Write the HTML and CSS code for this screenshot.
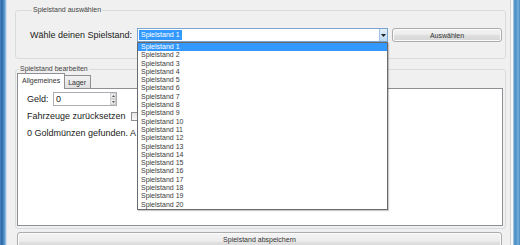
FILE: index.html
```html
<!DOCTYPE html>
<html lang="de">
<head>
  <meta charset="UTF-8">
  <title>Spielstand Editor</title>
  <link rel="stylesheet" href="styles.css">
</head>
<body>
  <div class="window">
    <div class="frame frame-left"></div>

    <div class="client">
      <fieldset class="group group-select">
        <legend>Spielstand auswählen</legend>
        <div class="select-row">
          <label class="big-label select-label">Wähle deinen Spielstand:</label>
          <div class="combo">
            <span class="combo-value">Spielstand 1</span>
            <span class="combo-arrow">
              <svg width="5" height="3" viewBox="0 0 5 3"><path d="M0 0h5L2.5 3z" fill="#222"/></svg>
            </span>
            <ul class="combo-list">
              <li class="selected">Spielstand 1</li>
              <li>Spielstand 2</li>
              <li>Spielstand 3</li>
              <li>Spielstand 4</li>
              <li>Spielstand 5</li>
              <li>Spielstand 6</li>
              <li>Spielstand 7</li>
              <li>Spielstand 8</li>
              <li>Spielstand 9</li>
              <li>Spielstand 10</li>
              <li>Spielstand 11</li>
              <li>Spielstand 12</li>
              <li>Spielstand 13</li>
              <li>Spielstand 14</li>
              <li>Spielstand 15</li>
              <li>Spielstand 16</li>
              <li>Spielstand 17</li>
              <li>Spielstand 18</li>
              <li>Spielstand 19</li>
              <li>Spielstand 20</li>
            </ul>
          </div>
          <button class="btn btn-select">Auswählen</button>
        </div>
      </fieldset>

      <fieldset class="group group-edit">
        <legend>Spielstand bearbeiten</legend>
        <div class="tabs">
          <div class="tab-strip">
            <span class="tab active">Allgemeines</span>
            <span class="tab">Lager</span>
          </div>
          <div class="tab-page">
            <div class="field-row">
              <span class="big-label geld-label">Geld:</span>
              <div class="spin">
                <span class="spin-value">0</span>
                <span class="spin-btns">
                  <span class="spin-btn"><svg width="3" height="2" viewBox="0 0 3 2"><path d="M1.5 0L3 2H0z" fill="#555"/></svg></span>
                  <span class="spin-btn"><svg width="3" height="2" viewBox="0 0 3 2"><path d="M0 0h3L1.5 2z" fill="#555"/></svg></span>
                </span>
              </div>
            </div>
            <div class="field-row">
              <span class="big-label">Fahrzeuge zurücksetzen</span>
              <span class="check"></span>
            </div>
            <div class="field-row">
              <span class="big-label">0 Goldmünzen gefunden. A</span>
            </div>
          </div>
        </div>
      </fieldset>

      <button class="btn btn-save">Spielstand abspeichern</button>
    </div>

    <div class="frame frame-right"></div>
  </div>
</body>
</html>
```

FILE: styles.css
```css
html, body {
  margin: 0;
  padding: 0;
  overflow: hidden;
}

body {
  font-family: "Liberation Sans", Arial, sans-serif;
  color: #333;
  background-color: #f0f0f0;
}

.window {
  display: flex;
  width: 520px;
  height: 245px;
  overflow: hidden;
}

.frame {
  flex: none;
  width: 7px;
}

.frame-left {
  background: linear-gradient(to right, #4b87c0 0, #2a63a0 2px, #3f7fbb 3px, #6aa3d4 5px, #b6d0e8 6px, #e9eef3 7px);
}

.frame-right {
  background: linear-gradient(to right, #e6eaee 0, #5c9acb 1px, #4f8fc4 3px, #73b3de 5px, #4a86bd 7px);
}

.client {
  flex: 1;
  padding: 6px 6px 0 8px;
  background-color: #f0f0f0;
  box-shadow: inset -2px 0 0 #f7f7f7, inset -3px 0 0 #d4d4d4;
}

/* group boxes */
.group {
  margin: 0;
  padding: 0;
  border: 1px solid #d7dcdf;
  border-radius: 3px;
}

.group legend {
  margin-left: 2px;
  padding: 0 1px;
  font-size: 7px;
  line-height: 8px;
  color: #444;
}

.group-select {
  width: 491px;
  padding: 0 3px 16px 14px;
  box-sizing: border-box;
}

.group-edit {
  width: 491px;
  margin-top: 6px;
  padding: 0 2px 2px 1px;
  box-sizing: border-box;
}

.big-label {
  font-size: 9px;
  color: #222;
  white-space: nowrap;
}

/* select row */
.select-row {
  display: flex;
  align-items: center;
  height: 14px;
  margin-top: 14px;
}

.select-label {
  width: 107px;
  flex: none;
}

.combo {
  position: relative;
  display: flex;
  align-items: center;
  width: 251px;
  height: 14px;
  box-sizing: border-box;
  padding-left: 1px;
  border: 1px solid #7ba4cf;
  background: #fff;
}

.combo-value {
  padding: 0 2px;
  font-size: 7px;
  line-height: 10px;
  color: #fff;
  background: #3399ff;
}

.combo-arrow {
  display: flex;
  align-items: center;
  justify-content: center;
  width: 8px;
  height: 12px;
  margin-left: auto;
  box-sizing: border-box;
  border-left: 1px solid #9ec3e4;
  background: linear-gradient(#e3f0fb, #b9d8f2);
}

.combo-list {
  position: absolute;
  top: 13px;
  left: -1px;
  z-index: 10;
  width: 251px;
  margin: 0;
  padding: 0;
  list-style: none;
  box-sizing: border-box;
  border: 1px solid #6a6a6a;
  background: #fff;
  box-shadow: 1px 1px 1px rgba(0, 0, 0, 0.2);
}

.combo-list li {
  height: 8.3px;
  padding-left: 3px;
  font-size: 7px;
  line-height: 8.3px;
  color: #3a3a3a;
}

.combo-list li.selected {
  background: #3399ff;
  color: #fff;
}

/* buttons */
.btn {
  display: block;
  padding: 0;
  font-family: "Liberation Sans", Arial, sans-serif;
  font-size: 7px;
  color: #333;
  border: 1px solid #acacac;
  border-radius: 3px;
  background: linear-gradient(#f4f4f4 0, #ececec 45%, #dedede 55%, #d6d6d6 100%);
  box-shadow: inset 0 0 0 1px #fbfbfb;
}

.btn-select {
  width: 110px;
  height: 14px;
  margin-left: 4px;
}

.btn-save {
  width: 485px;
  height: 20px;
  margin: 3px 0 0 2px;
  padding-bottom: 6px;
}

/* tabs */
.tab-strip {
  display: flex;
  align-items: flex-end;
  height: 15px;
}

.tab {
  height: 13px;
  padding: 0 4px;
  font-size: 7px;
  line-height: 13px;
  color: #333;
  box-sizing: border-box;
  border: 1px solid #8e9094;
  border-bottom: none;
  background: linear-gradient(#f2f2f2, #e0e0e0);
}

.tab.active {
  height: 16px;
  margin-bottom: -1px;
  line-height: 14px;
  background: #fff;
  position: relative;
  z-index: 1;
}

.tab + .tab {
  margin-left: -1px;
  border-left: none;
}

.tab-page {
  height: 138px;
  box-sizing: border-box;
  padding: 3px 0 0 9px;
  border: 1px solid #8e9094;
  background: #fff;
}

.field-row {
  display: flex;
  align-items: center;
  height: 14px;
  margin-bottom: 3px;
}

.geld-label {
  width: 26px;
}

.spin {
  display: flex;
  width: 64px;
  height: 14px;
  box-sizing: border-box;
  border: 1px solid #abadb3;
  background: #fff;
}

.spin-value {
  flex: 1;
  padding-left: 2px;
  font-size: 9px;
  line-height: 12px;
  color: #222;
}

.spin-btns {
  display: flex;
  flex-direction: column;
  width: 6px;
}

.spin-btn {
  display: flex;
  flex: 1;
  align-items: center;
  justify-content: center;
  border: 1px solid #d0d0d0;
  background: linear-gradient(#f6f6f6, #e3e3e3);
}

.check {
  width: 7px;
  height: 7px;
  margin-left: 5px;
  border: 1px solid #8f8f8f;
  background: linear-gradient(#e6e6e6, #fafafa);
}
```
